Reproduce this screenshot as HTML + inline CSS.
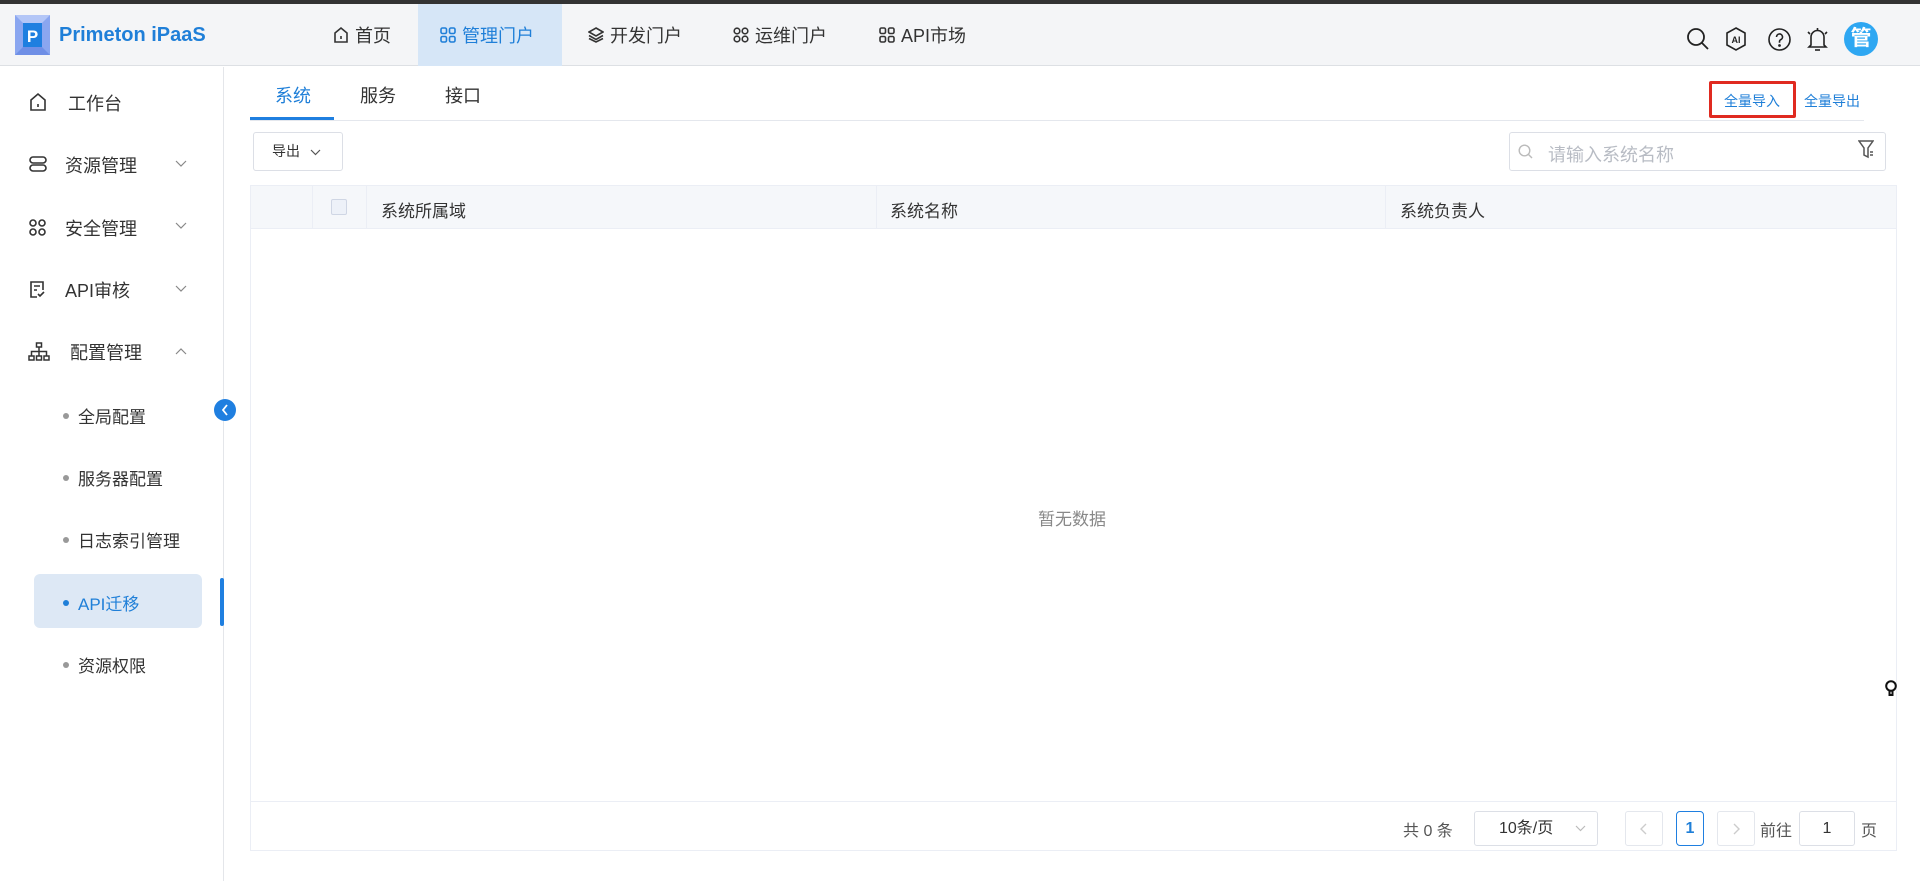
<!DOCTYPE html>
<html><head><meta charset="utf-8"><style>
*{box-sizing:border-box;margin:0;padding:0}
body{width:1920px;height:881px;position:relative;overflow:hidden;background:#fff;font-family:"Liberation Sans","Noto Sans CJK SC",sans-serif;color:#333}
.a{position:absolute}
.nav{font-size:18px;color:#333;top:22px;display:flex;align-items:center;gap:6px}
.side{font-size:18px;color:#333;left:65px}
.sub{font-size:17px;color:#333;left:78px}
.dot{position:absolute;left:-15px;top:10px;width:6px;height:6px;border-radius:50%;background:#999}
svg{display:block}
</style></head><body>
<div class="a" style="left:0;top:0;width:1920px;height:4px;background:#333"></div>
<div class="a" style="left:0;top:4px;width:1920px;height:62px;background:#f4f5f7;border-bottom:1px solid #dde0e4"></div>
<svg class="a" style="left:15px;top:15px" width="35" height="40" viewBox="0 0 35 40"><rect width="35" height="40" fill="#8aa6f0"/><polygon points="0,0 35,0 27,8 8,8" fill="#b3c6f7"/><polygon points="0,40 35,40 27,32 8,32" fill="#6f8fe6"/><rect x="8" y="8" width="19" height="24" fill="#1f7fe0"/><text x="17.5" y="27" font-size="17" font-weight="bold" fill="#fff" text-anchor="middle" font-family="Liberation Sans">P</text></svg>
<div class="a" style="left:59px;top:24px;font-size:20px;font-weight:bold;color:#1f7fd8">Primeton iPaaS</div>
<div class="a" style="left:418px;top:4px;width:144px;height:62px;background:#d6e6f7"></div>
<div class="a nav" style="left:333px"><svg width="16" height="18" viewBox="0 0 16 18"><path d="M2 7L8 2L14 7V16H2Z" fill="none" stroke="#333" stroke-width="1.6"/><path d="M8 10v3" stroke="#333" stroke-width="1.6"/></svg>首页</div>
<div class="a nav" style="left:440px;color:#1f7fd8"><svg width="16" height="16" viewBox="0 0 16 16" fill="none" stroke="#1f7fd8" stroke-width="1.6"><rect x="1" y="1" width="5.5" height="5.5" rx="1.5"/><rect x="9.5" y="1" width="5.5" height="5.5" rx="1.5"/><rect x="1" y="9.5" width="5.5" height="5.5" rx="1.5"/><rect x="9.5" y="9.5" width="5.5" height="5.5" rx="1.5"/></svg>管理门户</div>
<div class="a nav" style="left:588px"><svg width="16" height="16" viewBox="0 0 16 16" fill="none" stroke="#333" stroke-width="1.6"><path d="M8 1L15 5L8 9L1 5Z"/><path d="M1 8.5L8 12.5L15 8.5"/><path d="M1 11.5L8 15L15 11.5"/></svg>开发门户</div>
<div class="a nav" style="left:733px"><svg width="16" height="16" viewBox="0 0 16 16" fill="none" stroke="#333" stroke-width="1.6"><circle cx="4" cy="4" r="2.8"/><circle cx="12" cy="4" r="2.8"/><circle cx="4" cy="12" r="2.8"/><circle cx="12" cy="12" r="2.8"/></svg>运维门户</div>
<div class="a nav" style="left:879px"><svg width="16" height="16" viewBox="0 0 16 16" fill="none" stroke="#333" stroke-width="1.6"><rect x="1" y="1" width="5.5" height="5.5" rx="1.5"/><rect x="9.5" y="1" width="5.5" height="5.5" rx="1.5"/><rect x="1" y="9.5" width="5.5" height="5.5" rx="1.5"/><rect x="9.5" y="9.5" width="5.5" height="5.5" rx="1.5"/></svg>API市场</div>
<svg class="a" style="left:1686px;top:27px" width="24" height="24" viewBox="0 0 24 24" fill="none" stroke="#222" stroke-width="1.8"><circle cx="10" cy="10" r="8"/><path d="M16 16L22 22"/></svg>
<svg class="a" style="left:1725px;top:27px" width="22" height="24" viewBox="0 0 22 24" fill="none" stroke="#222" stroke-width="1.6"><path d="M11 1L20 6V18L11 23L2 18V6Z"/><text x="11" y="16" font-size="9" font-weight="bold" fill="#222" stroke="none" text-anchor="middle" font-family="Liberation Sans">AI</text></svg>
<svg class="a" style="left:1768px;top:28px" width="23" height="23" viewBox="0 0 23 23" fill="none" stroke="#222" stroke-width="1.6"><circle cx="11.5" cy="11.5" r="10.5"/><path d="M8.5 9a3 3 0 1 1 4 2.8c-.8.4-1 1-1 2v1"/><circle cx="11.5" cy="17.5" r=".6" fill="#222"/></svg>
<svg class="a" style="left:1806px;top:26px" width="23" height="27" viewBox="0 0 23 27" fill="none" stroke="#222" stroke-width="1.6"><path d="M5 19V11a6.5 6.5 0 0 1 13 0v8l2 2H3Z"/><path d="M9 24h5"/><path d="M11.5 2v2"/><path d="M2 6l2 2M21 6l-2 2"/></svg>
<div class="a" style="left:1844px;top:22px;width:34px;height:34px;border-radius:50%;background:#2ea7f2;color:#fff;font-size:21px;font-weight:bold;text-align:center;line-height:34px">管</div>
<!-- sidebar -->
<div class="a" style="left:223px;top:67px;width:1px;height:814px;background:#e4e6ea"></div>
<svg class="a" style="left:29px;top:92px" width="18" height="20" viewBox="0 0 18 20" fill="none" stroke="#333" stroke-width="1.6"><path d="M2 8L9 2L16 8V18H2Z"/><path d="M9 12v3"/></svg>
<div class="a side" style="top:90px;left:68px">工作台</div>
<svg class="a" style="left:29px;top:156px" width="18" height="16" viewBox="0 0 18 16" fill="none" stroke="#333" stroke-width="1.6"><rect x="1" y="1" width="16" height="6" rx="3"/><rect x="1" y="9" width="16" height="6" rx="3"/></svg>
<div class="a side" style="top:152px">资源管理</div>
<svg class="a" style="left:175px;top:160px" width="12" height="7" viewBox="0 0 12 7" fill="none" stroke="#888" stroke-width="1.2"><path d="M1 1L6 6L11 1"/></svg>
<svg class="a" style="left:29px;top:219px" width="17" height="17" viewBox="0 0 17 17" fill="none" stroke="#333" stroke-width="1.6"><circle cx="4" cy="4" r="3"/><circle cx="13" cy="4" r="3"/><circle cx="4" cy="13" r="3"/><circle cx="13" cy="13" r="3"/></svg>
<div class="a side" style="top:215px">安全管理</div>
<svg class="a" style="left:175px;top:222px" width="12" height="7" viewBox="0 0 12 7" fill="none" stroke="#888" stroke-width="1.2"><path d="M1 1L6 6L11 1"/></svg>
<svg class="a" style="left:29px;top:280px" width="17" height="19" viewBox="0 0 17 19" fill="none" stroke="#333" stroke-width="1.6"><path d="M14 10V2H2V17H8"/><path d="M5 6h6M5 10h3"/><path d="M9 14l2 2l4-4"/></svg>
<div class="a side" style="top:277px">API审核</div>
<svg class="a" style="left:175px;top:285px" width="12" height="7" viewBox="0 0 12 7" fill="none" stroke="#888" stroke-width="1.2"><path d="M1 1L6 6L11 1"/></svg>
<svg class="a" style="left:28px;top:342px" width="22" height="19" viewBox="0 0 22 19" fill="none" stroke="#333" stroke-width="1.5"><rect x="8.5" y="1" width="5" height="4"/><rect x="1" y="14" width="5" height="4"/><rect x="8.5" y="14" width="5" height="4"/><rect x="16" y="14" width="5" height="4"/><path d="M11 5v4.5M3.5 14V9.5H18.5V14M11 9.5V14"/></svg>
<div class="a side" style="top:339px;left:70px">配置管理</div>
<svg class="a" style="left:175px;top:348px" width="12" height="7" viewBox="0 0 12 7" fill="none" stroke="#888" stroke-width="1.2"><path d="M1 6L6 1L11 6"/></svg>
<div class="a sub" style="top:403px"><span class="dot"></span>全局配置</div>
<div class="a" style="left:214px;top:399px;width:22px;height:22px;border-radius:50%;background:#1f7fe0"></div>
<svg class="a" style="left:221px;top:404px" width="8" height="12" viewBox="0 0 8 12" fill="none" stroke="#fff" stroke-width="1.8"><path d="M6 1L2 6L6 11"/></svg>
<div class="a sub" style="top:465px"><span class="dot"></span>服务器配置</div>
<div class="a sub" style="top:527px"><span class="dot"></span>日志索引管理</div>
<div class="a" style="left:34px;top:574px;width:168px;height:54px;border-radius:6px;background:#dde8f5"></div>
<div class="a" style="left:220px;top:578px;width:4px;height:48px;border-radius:2px;background:#1f7fe0"></div>
<div class="a sub" style="top:590px;color:#1f7fd8"><span class="dot" style="background:#1f7fd8"></span>API迁移</div>
<div class="a sub" style="top:652px"><span class="dot"></span>资源权限</div>
<!-- tabs -->
<div class="a" style="left:250px;top:120px;width:1614px;height:1px;background:#e4e7ed"></div>
<div class="a" style="left:250px;top:117px;width:84px;height:3px;background:#1f7fe0"></div>
<div class="a" style="left:275px;top:82px;font-size:18px;color:#1f7fd8">系统</div>
<div class="a" style="left:360px;top:82px;font-size:18px">服务</div>
<div class="a" style="left:445px;top:82px;font-size:18px">接口</div>
<div class="a" style="left:1709px;top:81px;width:87px;height:37px;border:3px solid #e02a20;border-radius:2px"></div>
<div class="a" style="left:1724px;top:91px;font-size:14px;color:#1f7fd8">全量导入</div>
<div class="a" style="left:1804px;top:91px;font-size:14px;color:#1f7fd8">全量导出</div>
<!-- toolbar -->
<div class="a" style="left:253px;top:132px;width:90px;height:39px;border:1px solid #dcdfe6;border-radius:3px;font-size:14px;line-height:37px;padding-left:18px">导出</div>
<svg class="a" style="left:310px;top:149px" width="11" height="7" viewBox="0 0 11 7" fill="none" stroke="#555" stroke-width="1.2"><path d="M1 1L5.5 5.5L10 1"/></svg>
<div class="a" style="left:1509px;top:132px;width:377px;height:39px;border:1px solid #dcdfe6;border-radius:3px"></div>
<svg class="a" style="left:1518px;top:144px" width="15" height="15" viewBox="0 0 15 15" fill="none" stroke="#bbb" stroke-width="1.4"><circle cx="6.5" cy="6.5" r="5.3"/><path d="M10.5 10.5L14 14"/></svg>
<div class="a" style="left:1548px;top:141px;font-size:18px;color:#b8bcc4">请输入系统名称</div>
<svg class="a" style="left:1858px;top:140px" width="16" height="20" viewBox="0 0 16 20" fill="none" stroke="#555" stroke-width="1.5"><path d="M1 1H15L10 8V17L6 15V8Z"/><path d="M12 12h3M12 15h3"/></svg>
<!-- table -->
<div class="a" style="left:250px;top:185px;width:1647px;height:666px;border:1px solid #ebeef5;background:#fff"></div>
<div class="a" style="left:251px;top:186px;width:1645px;height:43px;background:#f5f7fa;border-bottom:1px solid #ebeef5"></div>
<div class="a" style="left:312px;top:186px;width:1px;height:43px;background:#ebeef5"></div>
<div class="a" style="left:366px;top:186px;width:1px;height:43px;background:#ebeef5"></div>
<div class="a" style="left:876px;top:186px;width:1px;height:43px;background:#ebeef5"></div>
<div class="a" style="left:1385px;top:186px;width:1px;height:43px;background:#ebeef5"></div>
<div class="a" style="left:331px;top:199px;width:16px;height:16px;border:1px solid #cfd6e4;border-radius:2px;background:#edf1f8"></div>
<div class="a" style="left:381px;top:197px;font-size:17px">系统所属域</div>
<div class="a" style="left:890px;top:197px;font-size:17px">系统名称</div>
<div class="a" style="left:1400px;top:197px;font-size:17px">系统负责人</div>
<div class="a" style="left:1038px;top:505px;font-size:17px;color:#888">暂无数据</div>
<div class="a" style="left:251px;top:801px;width:1645px;height:1px;background:#ebeef5"></div>
<div class="a" style="left:1403px;top:817px;font-size:16px;color:#555">共 0 条</div>
<div class="a" style="left:1474px;top:811px;width:124px;height:35px;border:1px solid #dcdfe6;border-radius:3px;font-size:16px;line-height:33px;padding-left:24px">10条/页</div>
<svg class="a" style="left:1575px;top:825px" width="11" height="7" viewBox="0 0 11 7" fill="none" stroke="#bbb" stroke-width="1.2"><path d="M1 1L5.5 5.5L10 1"/></svg>
<div class="a" style="left:1625px;top:811px;width:38px;height:35px;border:1px solid #e4e7ed;border-radius:3px"></div>
<svg class="a" style="left:1640px;top:823px" width="7" height="12" viewBox="0 0 7 12" fill="none" stroke="#ccc" stroke-width="1.4"><path d="M6 1L1 6L6 11"/></svg>
<div class="a" style="left:1676px;top:811px;width:28px;height:35px;border:1px solid #1f7fe0;border-radius:4px;color:#1f7fd8;text-align:center;line-height:33px;font-size:16px;font-weight:bold">1</div>
<div class="a" style="left:1717px;top:811px;width:38px;height:35px;border:1px solid #e4e7ed;border-radius:3px"></div>
<svg class="a" style="left:1733px;top:823px" width="7" height="12" viewBox="0 0 7 12" fill="none" stroke="#ccc" stroke-width="1.4"><path d="M1 1L6 6L1 11"/></svg>
<div class="a" style="left:1760px;top:817px;font-size:16px;color:#555">前往</div>
<div class="a" style="left:1799px;top:811px;width:56px;height:35px;border:1px solid #dcdfe6;border-radius:3px;text-align:center;line-height:33px;font-size:16px">1</div>
<div class="a" style="left:1861px;top:817px;font-size:16px;color:#555">页</div>
<svg class="a" style="left:1884px;top:680px" width="14" height="18" viewBox="0 0 14 18" fill="none" stroke="#111" stroke-width="2"><circle cx="7" cy="6" r="4.8"/><path d="M5.5 11v4h3v-4"/></svg>
</body></html>
